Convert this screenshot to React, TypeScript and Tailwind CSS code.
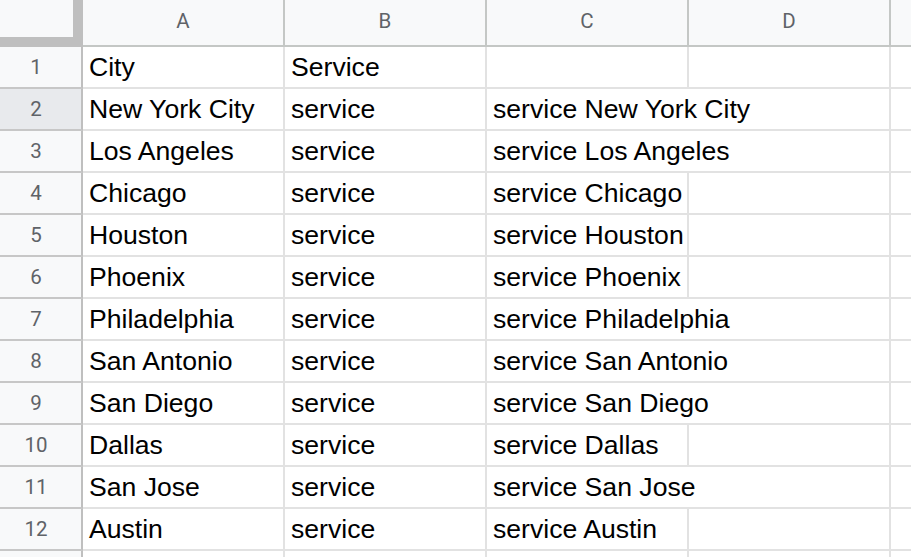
const columns = ["A", "B", "C", "D", "E"];

type Row = {
  city: string;
  service: string;
  joined: string;
  spills: boolean;
};

const rows: Row[] = [
  { city: "City", service: "Service", joined: "", spills: false },
  { city: "New York City", service: "service", joined: "service New York City", spills: true },
  { city: "Los Angeles", service: "service", joined: "service Los Angeles", spills: true },
  { city: "Chicago", service: "service", joined: "service Chicago", spills: false },
  { city: "Houston", service: "service", joined: "service Houston", spills: false },
  { city: "Phoenix", service: "service", joined: "service Phoenix", spills: false },
  { city: "Philadelphia", service: "service", joined: "service Philadelphia", spills: true },
  { city: "San Antonio", service: "service", joined: "service San Antonio", spills: true },
  { city: "San Diego", service: "service", joined: "service San Diego", spills: true },
  { city: "Dallas", service: "service", joined: "service Dallas", spills: false },
  { city: "San Jose", service: "service", joined: "service San Jose", spills: true },
  { city: "Austin", service: "service", joined: "service Austin", spills: false },
  { city: "", service: "", joined: "", spills: false },
];

const cellCls =
  "flex h-[42px] items-center overflow-visible whitespace-nowrap border-b-2 border-r-2 border-[#e2e2e2] bg-white pl-[6px] pr-[7px] pt-[2px] text-[26.6px] text-black";

function RowHeader({ n, active }: { n: number; active: boolean }) {
  return (
    <div
      className={`flex h-[42px] items-center justify-center border-b-2 border-r-2 border-b-[#c7c7c7] border-r-[#bfbfbf] pr-[9px] font-['Roboto'] text-[20.5px] text-[#5f6368] ${
        active ? "bg-[#e8eaed]" : "bg-[#f8f9fa]"
      }`}
    >
      {n}
    </div>
  );
}

export default function App() {
  return (
    <div className="h-screen w-screen overflow-hidden bg-white font-['Liberation_Sans',Arial,sans-serif]">
      <div className="grid w-[1093px] grid-cols-[83px_202px_202px_202px_202px_202px]">
        {/* corner with freeze handles */}
        <div className="h-[47px] bg-[#bfbfbf]">
          <div className="h-[37px] w-[73px] bg-[#f8f9fa]" />
        </div>
        {columns.map((c) => (
          <div
            key={c}
            className="flex h-[47px] items-center justify-center border-b-2 border-r-2 border-[#c4c7c5] bg-[#f8f9fa] pb-[2px] font-['Roboto'] text-[20.5px] text-[#5f6368]"
          >
            {c}
          </div>
        ))}

        {rows.map((row, i) => (
          <div key={i} className="contents">
            <RowHeader n={i + 1} active={i === 1} />
            <div className={cellCls}>{row.city}</div>
            <div className={cellCls}>{row.service}</div>
            {row.spills ? (
              <div className={`${cellCls} col-span-2`}>{row.joined}</div>
            ) : (
              <>
                <div className={cellCls}>{row.joined}</div>
                <div className={cellCls} />
              </>
            )}
            <div className={cellCls} />
          </div>
        ))}
      </div>
    </div>
  );
}
